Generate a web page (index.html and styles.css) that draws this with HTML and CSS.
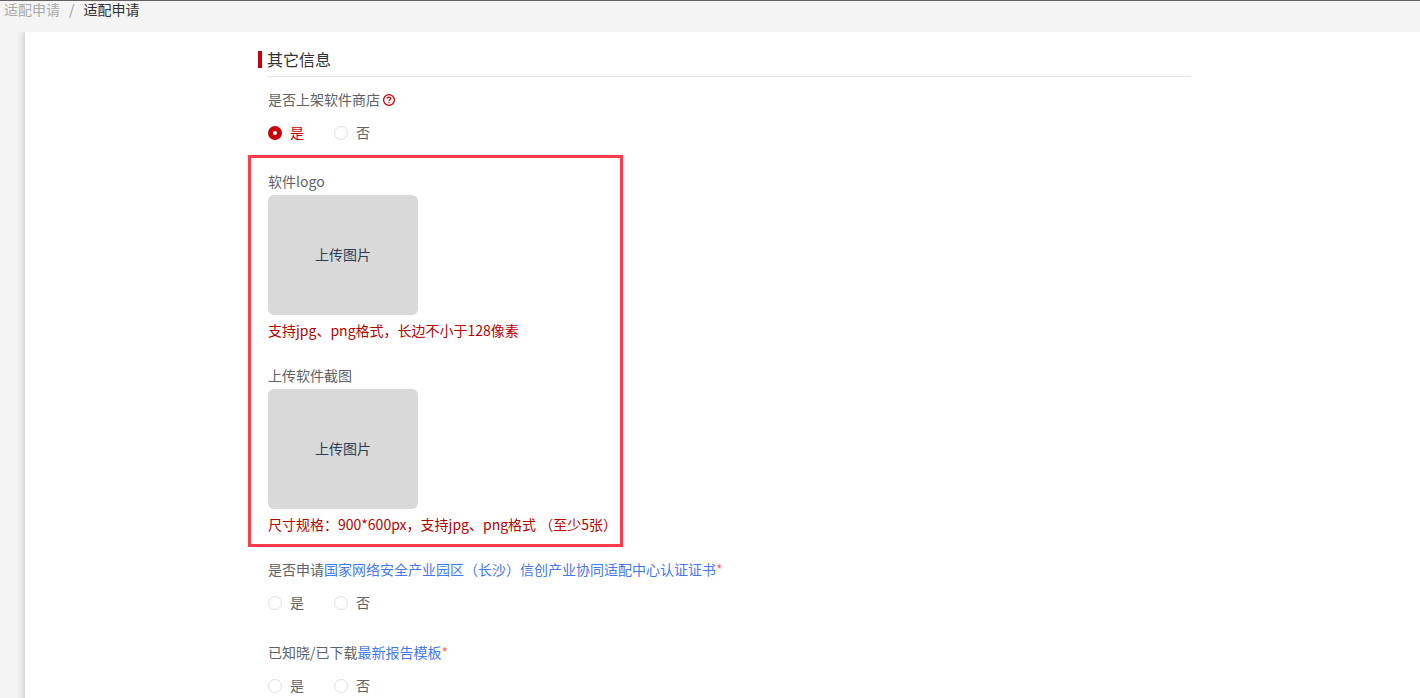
FILE: index.html
```html
<!DOCTYPE html>
<html lang="zh-CN">
<head>
<meta charset="utf-8">
<meta name="viewport" content="width=device-width, initial-scale=1">
<title>适配申请</title>
<link rel="stylesheet" href="styles.css">
</head>
<body>
<nav class="breadcrumb" aria-label="面包屑">
  <a class="crumb" href="#">适配申请</a>
  <span class="separator">/</span>
  <span class="current">适配申请</span>
</nav>
<main class="panel">
  <form class="form">
    <h2 class="section-title">其它信息</h2>

    <div class="field" role="radiogroup" aria-labelledby="store-label">
      <div class="label">
        <span id="store-label">是否上架软件商店</span>
        <svg class="help" viewBox="0 0 14 14" aria-hidden="true">
          <circle cx="7" cy="7" r="5.4"/>
          <path d="M5.2 5.8C5.2 4.7 6 4.1 7 4.1S8.8 4.7 8.8 5.6C8.8 6.7 7 6.7 7 8.1M7 9.1V10.2"/>
        </svg>
      </div>
      <div class="options">
        <label class="option"><input class="radio" type="radio" name="store" checked><span>是</span></label>
        <label class="option"><input class="radio" type="radio" name="store"><span>否</span></label>
      </div>
    </div>

    <section class="uploads">
      <div class="upload">
        <div class="label" id="logo-label">软件logo</div>
        <button class="picker" type="button" aria-describedby="logo-label">上传图片</button>
        <p class="hint">支持jpg、png格式，长边不小于128像素</p>
      </div>
      <div class="upload">
        <div class="label" id="shot-label">上传软件截图</div>
        <button class="picker" type="button" aria-describedby="shot-label">上传图片</button>
        <p class="hint">尺寸规格：900*600px，支持jpg、png格式 （至少5张）</p>
      </div>
    </section>

    <div class="field" role="radiogroup" aria-labelledby="cert-label">
      <div class="label" id="cert-label">是否申请<a class="link" href="#">国家网络安全产业园区（长沙）信创产业协同适配中心认证证书</a><span class="required">*</span></div>
      <div class="options">
        <label class="option"><input class="radio" type="radio" name="cert"><span>是</span></label>
        <label class="option"><input class="radio" type="radio" name="cert"><span>否</span></label>
      </div>
    </div>

    <div class="field" role="radiogroup" aria-labelledby="report-label">
      <div class="label" id="report-label">已知晓/已下载<a class="link" href="#">最新报告模板</a><span class="required">*</span></div>
      <div class="options">
        <label class="option"><input class="radio" type="radio" name="report"><span>是</span></label>
        <label class="option"><input class="radio" type="radio" name="report"><span>否</span></label>
      </div>
    </div>
  </form>
</main>
</body>
</html>
```

FILE: styles.css
```css
* {
  box-sizing: border-box;
}

body {
  display: flex;
  flex-direction: column;
  min-height: 100vh;
  margin: 0;
  border-top: 1px solid #646062;
  background: #f4f4f4;
  color: #606266;
  font: 14px/18px "Noto Sans CJK SC", sans-serif;
}

.breadcrumb {
  display: flex;
  gap: 9px;
  padding: 0 4px 15px;
  line-height: 16px;
}

.crumb {
  color: #aaa;
  text-decoration: none;
}

.separator {
  color: #999;
}

.current {
  color: #303133;
}

.panel {
  flex: 1;
  margin-left: 25px;
  padding: 16px 229px 0 243px;
  background: #fff;
  box-shadow: 0 0 8px 1px rgba(0, 0, 0, 0.2);
  clip-path: inset(0 0 0 -8px);
}

.section-title {
  display: flex;
  flex-wrap: wrap;
  align-items: center;
  gap: 6px 5px;
  margin: 0 0 13px -10px;
  color: #303133;
  font-size: 16px;
  font-weight: 400;
  line-height: 22px;
}

.section-title::before {
  content: "";
  width: 4px;
  height: 17px;
  background: #c7000b;
}

.section-title::after {
  content: "";
  flex: 0 0 calc(100% - 9px);
  height: 1px;
  margin-left: 9px;
  background: #e6e6e6;
}

.field {
  margin-bottom: 30px;
}

.label {
  display: flex;
  align-items: center;
  padding-bottom: 2px;
}

.help {
  width: 14px;
  height: 14px;
  margin: 2px 0 0 2px;
  fill: none;
  stroke: #c7000b;
  stroke-width: 1.3;
}

.options {
  display: flex;
  gap: 30px;
  margin-top: 13px;
  padding-bottom: 2px;
}

.option {
  display: flex;
  align-items: center;
  gap: 8px;
}

.radio {
  appearance: none;
  width: 14px;
  height: 14px;
  margin: 2px 0 0;
  border: 1px solid #dcdfe6;
  border-radius: 50%;
  background: #fff;
}

.radio:checked {
  border: 5px solid #c7000b;
}

.radio:checked + span {
  color: #c7000b;
}

.uploads {
  display: grid;
  gap: 25px;
  width: fit-content;
  margin: -18px 0 13px -20px;
  padding: 14px 3px 9px 17px;
  border: 3px solid #ff3b4b;
}

.picker {
  display: block;
  width: 150px;
  height: 120px;
  margin: 3px 0 6px;
  padding: 0 0 2px;
  border: 0;
  border-radius: 6px;
  background: #d9d9d9;
  color: #2c3e50;
  font: inherit;
}

.hint {
  margin: 0;
  padding-bottom: 2px;
  color: #b50000;
}

.link {
  color: #4478f0;
  text-decoration: none;
}

.required {
  color: #f56c6c;
}
```
